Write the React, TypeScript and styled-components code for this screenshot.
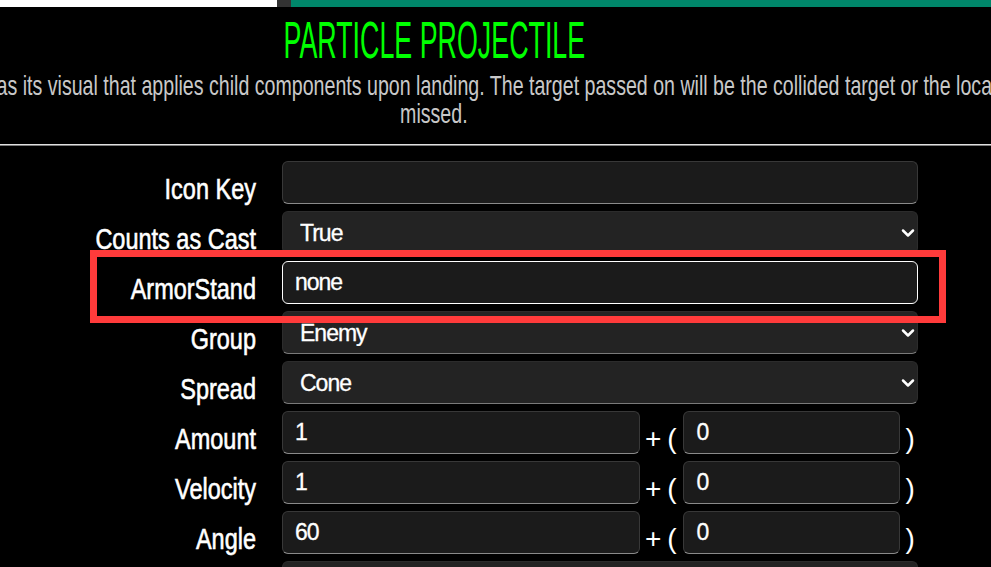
import React from 'react';
import styled, { createGlobalStyle } from 'styled-components';
import { ChevronDown } from 'lucide-react';

// no narrow face is installed, so the condensed look comes from scaleX on Arial metrics
const sans = `"Liberation Sans", Arial, sans-serif`;

const GlobalStyle = createGlobalStyle`
  html, body {
    margin: 0;
    padding: 0;
    background: #000;
    overflow: hidden;
  }
  body {
    font-family: ${sans};
    color: #fff;
  }
`;

const Page = styled.div`
  position: relative;
  width: 991px;
  height: 567px;
  overflow: hidden;
  background: #000;
`;

const TabStrip = styled.div`
  display: flex;
  height: 7px;
`;

const TabSegment = styled.div<{ $color: string; $width?: number }>`
  background: ${p => p.$color};
  ${p => (p.$width ? `width: ${p.$width}px;` : 'flex: 1;')}
`;

const Header = styled.header`
  width: 868px;
  display: flex;
  flex-direction: column;
  align-items: center;
`;

const Title = styled.h1`
  margin: 7px 0 0;
  font-family: ${sans};
  font-weight: 400;
  font-size: 52px;
  line-height: 52px;
  color: #00ff00;
  white-space: nowrap;
  transform: scaleX(0.516);
`;

const Description = styled.p`
  margin: 6px 0 0;
  font-family: ${sans};
  font-size: 28px;
  line-height: 28px;
  color: #c8c8c8;
  text-align: center;
  white-space: nowrap;
  transform: scaleX(0.7);
`;

const Divider = styled.div`
  margin-top: 16px;
  height: 1px;
  background: #e0e0e0;
  border-bottom: 1px solid #7a7a7a;
`;

const Form = styled.form`
  display: flex;
  flex-direction: column;
  gap: 7px;
  padding-top: 15px;
`;

const Row = styled.div`
  display: grid;
  grid-template-columns: 256px 636px;
  column-gap: 26px;
  height: 43px;
`;

const Label = styled.label`
  align-self: end;
  text-align: right;
  font-size: 29px;
  line-height: 29px;
  color: #fff;
  white-space: nowrap;
  -webkit-text-stroke: 0.6px #fff;
  transform: scaleX(0.81);
  transform-origin: right center;
`;

const TextField = styled.input<{ $focused?: boolean; $width?: number }>`
  box-sizing: border-box;
  flex-shrink: 0;
  width: ${p => (p.$width ? `${p.$width}px` : '100%')};
  height: 43px;
  padding: 0 12px;
  background: #1b1b1b;
  border: 1px solid ${p => (p.$focused ? '#ffffff' : '#383838')};
  border-bottom-color: ${p => (p.$focused ? '#ffffff' : '#8a8a8a')};
  border-radius: 6px;
  color: #fff;
  font-family: ${sans};
  font-size: 23px;
  letter-spacing: -1px;
  -webkit-text-stroke: 0.3px #fff;
  outline: none;
`;

const SelectWrap = styled.div`
  position: relative;
  height: 43px;
`;

const Select = styled.select`
  box-sizing: border-box;
  width: 100%;
  height: 43px;
  padding: 0 17px;
  appearance: none;
  background: #232323;
  border: 1px solid #2c2c2c;
  border-bottom-color: #7a7a7a;
  border-radius: 6px;
  color: #fff;
  font-family: ${sans};
  font-size: 23px;
  letter-spacing: -1px;
  -webkit-text-stroke: 0.3px #fff;
  outline: none;
`;

const Chevron = styled.span`
  position: absolute;
  right: 0;
  top: 50%;
  height: 20px;
  margin-top: -10px;
  color: #fff;
  pointer-events: none;
`;

const NumberPair = styled.div`
  display: flex;
  align-items: stretch;
`;

const Paren = styled.span<{ $gap: number }>`
  align-self: flex-end;
  flex-shrink: 0;
  margin: 0 ${p => p.$gap}px 0 5px;
  font-family: ${sans};
  font-size: 28px;
  line-height: 30px;
  letter-spacing: -1px;
  color: #fff;
  white-space: nowrap;
`;

const Highlight = styled.div`
  position: absolute;
  left: 90px;
  top: 250px;
  width: 856px;
  height: 73px;
  box-sizing: border-box;
  border: 7px solid #ff3b3b;
  pointer-events: none;
`;

type Field =
  | { label: string; kind: 'text'; value: string; focused?: boolean }
  | { label: string; kind: 'select'; value: string; options: string[] }
  | { label: string; kind: 'pair'; value: string; extra: string };

const fields: Field[] = [
  { label: 'Icon Key', kind: 'text', value: '' },
  { label: 'Counts as Cast', kind: 'select', value: 'True', options: ['True', 'False'] },
  { label: 'ArmorStand', kind: 'text', value: 'none', focused: true },
  { label: 'Group', kind: 'select', value: 'Enemy', options: ['Ally', 'Enemy', 'Both'] },
  { label: 'Spread', kind: 'select', value: 'Cone', options: ['Cone', 'Horizontal Cone', 'Rain'] },
  { label: 'Amount', kind: 'pair', value: '1', extra: '0' },
  { label: 'Velocity', kind: 'pair', value: '1', extra: '0' },
  { label: 'Angle', kind: 'pair', value: '60', extra: '0' },
  { label: 'Position', kind: 'select', value: 'Feet', options: ['Feet', 'Chest'] },
];

const renderControl = (f: Field) => {
  if (f.kind === 'text') {
    return <TextField type="text" defaultValue={f.value} $focused={f.focused} />;
  }
  if (f.kind === 'select') {
    return (
      <SelectWrap>
        <Select defaultValue={f.value}>
          {f.options.map(o => (
            <option key={o}>{o}</option>
          ))}
        </Select>
        <Chevron>
          <ChevronDown size={20} strokeWidth={3} />
        </Chevron>
      </SelectWrap>
    );
  }
  return (
    <NumberPair>
      <TextField type="text" defaultValue={f.value} $width={358} />
      <Paren $gap={8}>+ (</Paren>
      <TextField type="text" defaultValue={f.extra} $width={217} />
      <Paren $gap={0}>)</Paren>
    </NumberPair>
  );
};

export default function App() {
  return (
    <Page>
      <GlobalStyle />
      <TabStrip>
        <TabSegment $color="#ffffff" $width={277} />
        <TabSegment $color="#333333" $width={14} />
        <TabSegment $color="#00876a" />
      </TabStrip>

      <Header>
        <Title>PARTICLE PROJECTILE</Title>
        <Description>
          Launches a projectile using particles as its visual that applies child components upon landing. The target passed on will be the collided target or the location where it landed if it
          <br />
          missed.
        </Description>
      </Header>

      <Divider />

      <Form onSubmit={e => e.preventDefault()}>
        {fields.map(f => (
          <Row key={f.label}>
            <Label>{f.label}</Label>
            {renderControl(f)}
          </Row>
        ))}
      </Form>

      <Highlight />
    </Page>
  );
}
